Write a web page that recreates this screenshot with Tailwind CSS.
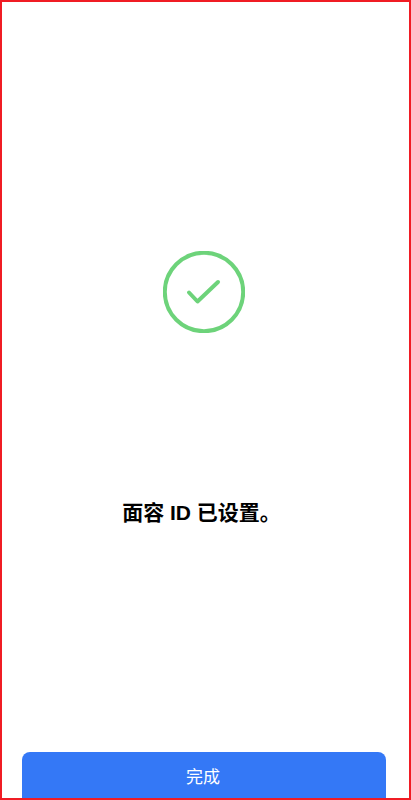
<!DOCTYPE html>
<html lang="zh-CN">
<head>
<meta charset="utf-8">
<title>面容 ID 已设置</title>
<script src="https://cdn.jsdelivr.net/npm/@tailwindcss/browser@4"></script>
</head>
<body class="bg-white">
<main class="h-[800px] w-[411px] border-2 border-[#f01c24] bg-white flex flex-col font-['Liberation_Sans','Noto_Sans_CJK_SC',sans-serif] overflow-hidden">
  <div class="flex-1 flex flex-col">
    <div class="pt-[249px] pl-[161px]">
      <svg class="block w-[82px] h-[82px]" viewBox="0 0 82 82" fill="none">
        <circle cx="41" cy="41" r="39.2" stroke="#6dd37a" stroke-width="4"/>
        <path d="M26 41.5L34.5 50.5L55 31" stroke="#6dd37a" stroke-width="4" stroke-linecap="round" stroke-linejoin="round"/>
      </svg>
    </div>
    <h1 class="mt-[166px] text-center pr-[8px] text-[21px] leading-[28px] font-bold text-black">面容 ID 已设置。</h1>
  </div>
  <button class="ml-[20px] w-[364px] h-[46px] rounded-t-lg bg-[#3478f6] text-white text-[17px] pt-[5px] pr-[2px]">完成</button>
</main>
</body>
</html>
